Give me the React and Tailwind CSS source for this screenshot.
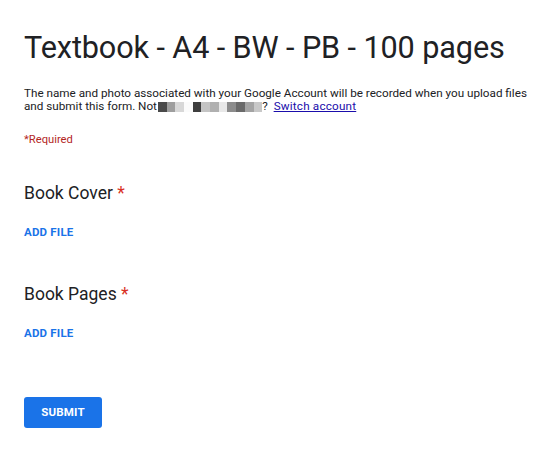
import React from 'react';

// Blurred-out account name, drawn as a strip of grey tiles
const maskTiles = [
    '#4a4a4a', '#9e9e9e', '#d8d8d8', '#fbfbfb', '#3e3e3e', '#c4c4c4',
    '#b0b0b0', '#e8e8e8', '#8c8c8c', '#6a6a6a', '#a4a4a4', '#c8c8c8',
];

const FileQuestion = ({ title }) => (
    <div className="flex flex-col">
        <h2 className="text-[17.5px] leading-[22px] text-[#202124]">
            {title} <span className="text-[#d93025]">*</span>
        </h2>
        <button className="self-start mt-[21px] text-[11.5px] leading-[14px] font-bold text-[#1a73e8] tracking-[0.2px]">
            ADD FILE
        </button>
    </div>
);

export default function App() {
    return (
        <div className="min-h-[473px] bg-white px-6 pt-[30px] font-['Roboto',sans-serif] text-[#202124]">
            <h1 className="text-[30.6px] leading-[36px] tracking-[-0.1px]">Textbook - A4 - BW - PB - 100 pages</h1>

            <p className="mt-[21px] text-[11.7px] leading-[13px] text-[#202124] whitespace-nowrap">
                The name and photo associated with your Google Account will be recorded when you upload files
                <br />
                and submit this form. Not
                <span className="inline-block align-[-2px] h-[10px] ml-px">
                    {maskTiles.map((c, i) => (
                        <span key={i} className="inline-block w-[8.7px] h-[10px]" style={{ backgroundColor: c }} />
                    ))}
                </span>
                ? <a href="#" className="ml-[3px] text-[#1a0dab] underline tracking-[0.2px]">Switch account</a>
            </p>

            <div className="mt-[20px] text-[11.2px] leading-[14px] text-[#b3261e]">*Required</div>

            <div className="mt-[35px] flex flex-col gap-[44px]">
                <FileQuestion title="Book Cover" />
                <FileQuestion title="Book Pages" />
            </div>

            <button className="mt-[57px] w-[78px] h-[31px] rounded-[3px] bg-[#1a73e8] text-white text-[11.5px] font-bold tracking-[0.2px]">
                SUBMIT
            </button>
        </div>
    );
}
